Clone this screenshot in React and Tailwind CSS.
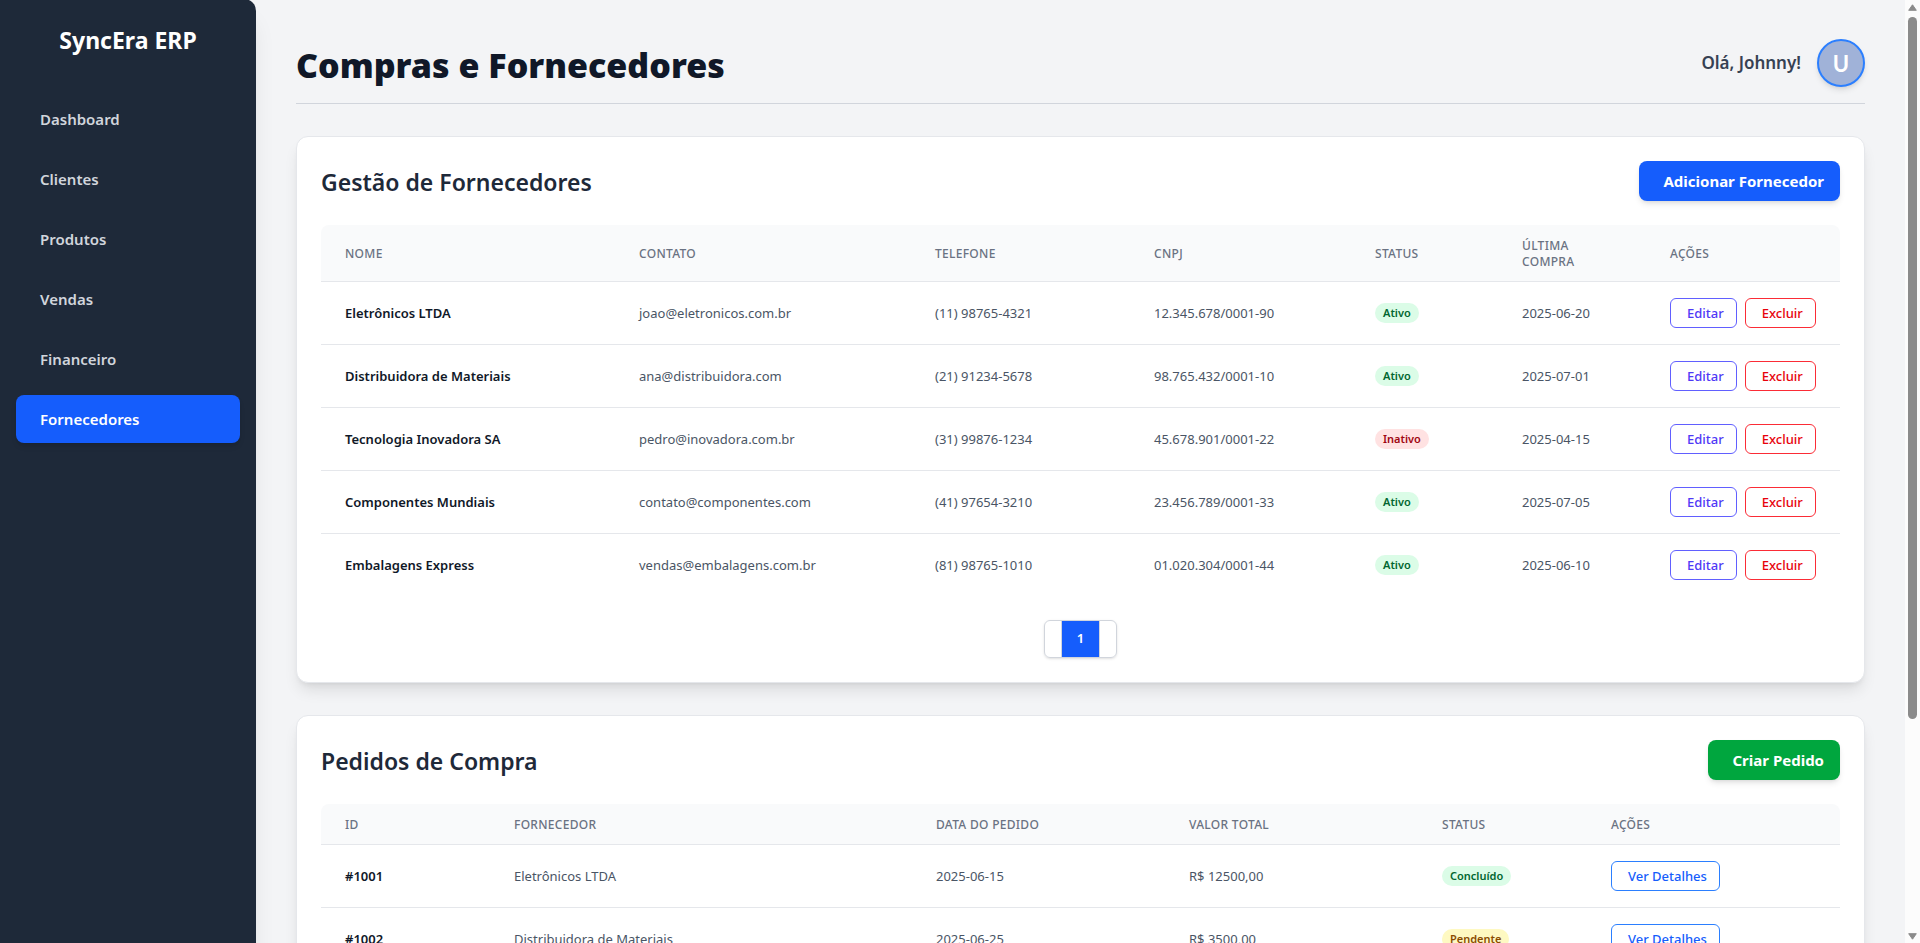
const menu = ["Dashboard", "Clientes", "Produtos", "Vendas", "Financeiro", "Fornecedores"];

const suppliers = [
  ["Eletrônicos LTDA", "joao@eletronicos.com.br", "(11) 98765-4321", "12.345.678/0001-90", "Ativo", "2025-06-20"],
  ["Distribuidora de Materiais", "ana@distribuidora.com", "(21) 91234-5678", "98.765.432/0001-10", "Ativo", "2025-07-01"],
  ["Tecnologia Inovadora SA", "pedro@inovadora.com.br", "(31) 99876-1234", "45.678.901/0001-22", "Inativo", "2025-04-15"],
  ["Componentes Mundiais", "contato@componentes.com", "(41) 97654-3210", "23.456.789/0001-33", "Ativo", "2025-07-05"],
  ["Embalagens Express", "vendas@embalagens.com.br", "(81) 98765-1010", "01.020.304/0001-44", "Ativo", "2025-06-10"],
];

const orders = [
  ["#1001", "Eletrônicos LTDA", "2025-06-15", "R$ 12500,00", "Concluído"],
  ["#1002", "Distribuidora de Materiais", "2025-06-25", "R$ 3500,00", "Pendente"],
];

const badgeColors = {
  Ativo: "bg-green-100 text-green-800",
  Concluído: "bg-green-100 text-green-800",
  Inativo: "bg-red-100 text-red-800",
  Pendente: "bg-yellow-100 text-yellow-800",
};

const outlineColors = {
  indigo: "border-indigo-500 text-indigo-600",
  red: "border-red-500 text-red-600",
  blue: "border-blue-500 text-blue-600",
};

function Badge({ status }) {
  return (
    <span className={`inline-flex rounded-full px-2 align-top text-[11px] leading-5 font-semibold ${badgeColors[status]}`}>
      {status}
    </span>
  );
}

function OutlineButton({ color, children }) {
  return (
    <button
      type="button"
      className={`h-[30px] rounded-md border pr-3 pl-4 text-[13px] leading-4 font-medium ${outlineColors[color]}`}
    >
      {children}
    </button>
  );
}

function HeadCell({ children }) {
  return (
    <th scope="col" className="px-6 pt-[13px] pb-[11px] text-left text-xs font-medium tracking-wide text-gray-500 uppercase">
      {children}
    </th>
  );
}

function Cell({ strong, children }) {
  return (
    <td className={`px-6 py-4 whitespace-nowrap ${strong ? "font-semibold text-gray-900" : "text-gray-600"}`}>
      {children}
    </td>
  );
}

function Card({ title, action, actionClass, children }) {
  return (
    <section className="mb-8 rounded-xl border border-gray-200 bg-white p-6 shadow-lg">
      <div className="mb-6 flex items-center justify-between">
        <h2 className="pt-0.5 text-[23px] leading-8 font-semibold text-gray-800">{title}</h2>
        <button
          type="button"
          className={`h-10 rounded-lg pr-4 pl-6 text-[15px] font-bold text-white shadow-md ${actionClass}`}
        >
          {action}
        </button>
      </div>
      {children}
    </section>
  );
}

function SupplierTable() {
  return (
    <div className="overflow-hidden rounded-lg">
      <table className="w-full table-fixed text-[13px] leading-5">
        <colgroup>
          <col className="w-[294px]" />
          <col className="w-[296px]" />
          <col className="w-[219px]" />
          <col className="w-[221px]" />
          <col className="w-[147px]" />
          <col className="w-[148px]" />
          <col className="w-[194px]" />
        </colgroup>
        <thead className="bg-gray-50">
          <tr>
            <HeadCell>Nome</HeadCell>
            <HeadCell>Contato</HeadCell>
            <HeadCell>Telefone</HeadCell>
            <HeadCell>CNPJ</HeadCell>
            <HeadCell>Status</HeadCell>
            <HeadCell>
              Última
              <br />
              Compra
            </HeadCell>
            <HeadCell>Ações</HeadCell>
          </tr>
        </thead>
        <tbody className="divide-y divide-gray-200 border-t border-gray-200">
          {suppliers.map(([name, contact, phone, cnpj, status, last]) => (
            <tr key={name}>
              <Cell strong>{name}</Cell>
              <Cell>{contact}</Cell>
              <Cell>{phone}</Cell>
              <Cell>{cnpj}</Cell>
              <Cell>
                <Badge status={status} />
              </Cell>
              <Cell>{last}</Cell>
              <Cell>
                <div className="flex gap-2">
                  <OutlineButton color="indigo">Editar</OutlineButton>
                  <OutlineButton color="red">Excluir</OutlineButton>
                </div>
              </Cell>
            </tr>
          ))}
        </tbody>
      </table>
    </div>
  );
}

function OrderTable() {
  return (
    <div className="overflow-hidden rounded-lg">
      <table className="w-full table-fixed text-[13px] leading-5">
        <colgroup>
          <col className="w-[169px]" />
          <col className="w-[422px]" />
          <col className="w-[253px]" />
          <col className="w-[253px]" />
          <col className="w-[169px]" />
          <col className="w-[253px]" />
        </colgroup>
        <thead className="bg-gray-50">
          <tr>
            <HeadCell>ID</HeadCell>
            <HeadCell>Fornecedor</HeadCell>
            <HeadCell>Data do Pedido</HeadCell>
            <HeadCell>Valor Total</HeadCell>
            <HeadCell>Status</HeadCell>
            <HeadCell>Ações</HeadCell>
          </tr>
        </thead>
        <tbody className="divide-y divide-gray-200 border-t border-gray-200">
          {orders.map(([id, supplier, date, total, status]) => (
            <tr key={id}>
              <Cell strong>{id}</Cell>
              <Cell>{supplier}</Cell>
              <Cell>{date}</Cell>
              <Cell>{total}</Cell>
              <Cell>
                <Badge status={status} />
              </Cell>
              <Cell>
                <div className="flex">
                  <OutlineButton color="blue">Ver Detalhes</OutlineButton>
                </div>
              </Cell>
            </tr>
          ))}
        </tbody>
      </table>
    </div>
  );
}

function Pagination() {
  return (
    <nav aria-label="Paginação" className="mt-6 flex justify-center">
      <div className="flex -space-x-px rounded-md text-[13px] font-semibold shadow-sm">
        <button type="button" aria-label="Anterior" className="h-[38px] rounded-l-md border border-gray-300 bg-white px-2" />
        <button type="button" className="h-[38px] w-[39px] border border-gray-300 bg-blue-600 text-white">
          1
        </button>
        <button type="button" aria-label="Próxima" className="h-[38px] rounded-r-md border border-gray-300 bg-white px-2" />
      </div>
    </nav>
  );
}

function ScrollTrack() {
  return (
    <div aria-hidden="true" className="flex w-[15px] shrink-0 flex-col items-center bg-[#fcfcfc] pt-1 pb-[3px]">
      <svg className="mb-[6px] h-[7px] w-[9px] shrink-0" viewBox="0 0 9 7">
        <path d="M4.5 0.8 8.3 6.3H0.7Z" fill="#8b8b8b" stroke="#8b8b8b" strokeLinejoin="round" />
      </svg>
      <div className="w-[9px] flex-[702] rounded-full bg-[#8b8b8b]" />
      <div className="flex-[214]" />
      <svg className="h-[7px] w-[9px] shrink-0" viewBox="0 0 9 7">
        <path d="M4.5 6.2 8.3 0.7H0.7Z" fill="#8b8b8b" stroke="#8b8b8b" strokeLinejoin="round" />
      </svg>
    </div>
  );
}

export default function App() {
  return (
    <div className="flex h-screen overflow-hidden bg-gray-100 font-['Noto_Sans',sans-serif]">
      <div className="min-w-0 flex-1 overflow-hidden">
        <div className="-mt-px flex">
          <aside className="w-64 shrink-0 rounded-r-xl bg-gray-800 p-4 shadow-xl">
            <div className="mt-[9px] mb-[39px] text-center text-[23px] leading-8 font-bold text-white">SyncEra ERP</div>
            <nav className="flex flex-col gap-3">
              {menu.map((item) => (
                <a
                  key={item}
                  href="#"
                  className={`rounded-lg px-6 py-3 text-[15px] leading-6 font-semibold ${
                    item === "Fornecedores" ? "bg-blue-600 text-white shadow-md" : "text-gray-300"
                  }`}
                >
                  {item}
                </a>
              ))}
            </nav>
          </aside>
          <main className="min-w-0 flex-1 p-10">
            <header className="mb-8 flex items-center justify-between border-b border-gray-300 pb-4">
              <h1 className="pt-1 text-[34px] leading-10 font-black text-gray-900">Compras e Fornecedores</h1>
              <div className="flex items-center gap-4">
                <span className="text-[17px] leading-7 font-semibold text-gray-700">Olá, Johnny!</span>
                <div className="flex size-12 items-center justify-center rounded-full border-2 border-blue-500 bg-[#a0b2d8] font-[Lato,sans-serif] text-[22px] font-bold text-white shadow-md">
                  U
                </div>
              </div>
            </header>
            <Card title="Gestão de Fornecedores" action="Adicionar Fornecedor" actionClass="bg-blue-600">
              <SupplierTable />
              <Pagination />
            </Card>
            <Card title="Pedidos de Compra" action="Criar Pedido" actionClass="bg-green-600">
              <OrderTable />
            </Card>
          </main>
        </div>
      </div>
      <ScrollTrack />
    </div>
  );
}
